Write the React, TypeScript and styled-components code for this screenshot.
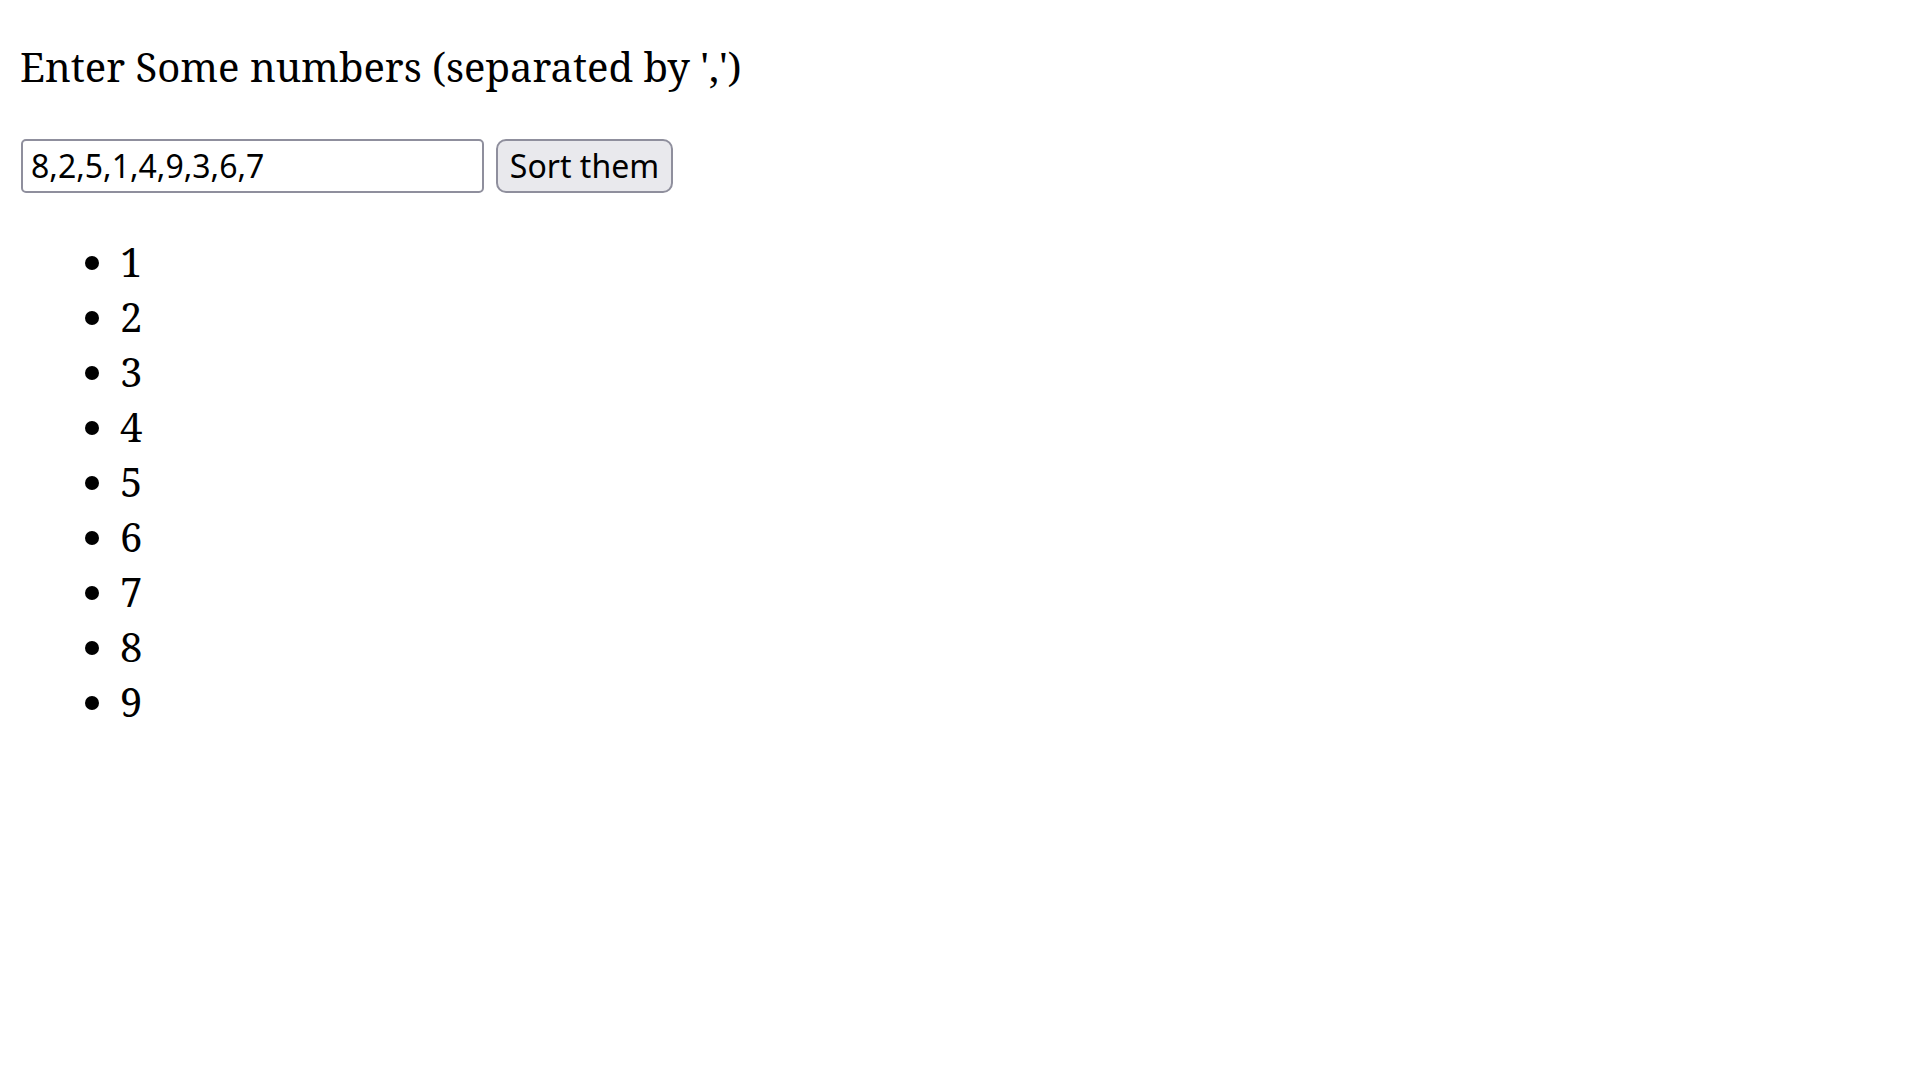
import React, { useState } from "react";
import styled, { createGlobalStyle } from "styled-components";

const GlobalStyle = createGlobalStyle`
  html, body { background: #ffffff; }
  body {
    margin: 0;
    font-family: "Noto Serif", "DejaVu Serif", serif;
    font-size: 40px;
    color: #000000;
  }
`;

const Page = styled.main`
  padding: 40px 20px 20px;
`;

const Prompt = styled.p`
  margin: 0 0 40px;
  font-size: 40px;
  line-height: 54.5px;
`;

const Row = styled.div`
  display: flex;
  align-items: center;
  gap: 12px;
  padding: 4px 0 4px 1px;
`;

const NumberInput = styled.input`
  box-sizing: border-box;
  width: 463px;
  height: 54px;
  margin: 0;
  padding: 0 8px;
  border: 2px solid #8f8f9d;
  border-radius: 5px;
  background: #ffffff;
  color: #000000;
  font-family: "Noto Sans", "Open Sans", sans-serif;
  font-size: 32px;
  outline: none;
`;

const SortButton = styled.button`
  box-sizing: border-box;
  height: 54px;
  width: 177px;
  margin: 0;
  padding: 0;
  border: 2px solid #8f8f9d;
  border-radius: 10px;
  background: #e9e9ed;
  color: #000000;
  font-family: "Noto Sans", "Open Sans", sans-serif;
  font-size: 32px;
  cursor: pointer;
`;

const List = styled.ul`
  margin: 37px 0 40px;
  padding-left: 100px;
  list-style: disc;
`;

const Item = styled.li`
  line-height: 55px;
`;

export default function App() {
  const [text, setText] = useState("8,2,5,1,4,9,3,6,7");
  const [nums, setNums] = useState<number[]>([1, 2, 3, 4, 5, 6, 7, 8, 9]);
  const sort = () => {
    const parsed = text
      .split(",")
      .map((s) => Number(s.trim()))
      .filter((n) => !Number.isNaN(n));
    setNums([...parsed].sort((a, b) => a - b));
  };
  return (
    <>
      <GlobalStyle />
      <Page>
        <Prompt>Enter Some numbers (separated by ',')</Prompt>
        <Row>
          <NumberInput value={text} onChange={(e) => setText(e.target.value)} />
          <SortButton onClick={sort}>Sort them</SortButton>
        </Row>
        <List>
          {nums.map((n, i) => (
            <Item key={i}>{n}</Item>
          ))}
        </List>
      </Page>
    </>
  );
}
